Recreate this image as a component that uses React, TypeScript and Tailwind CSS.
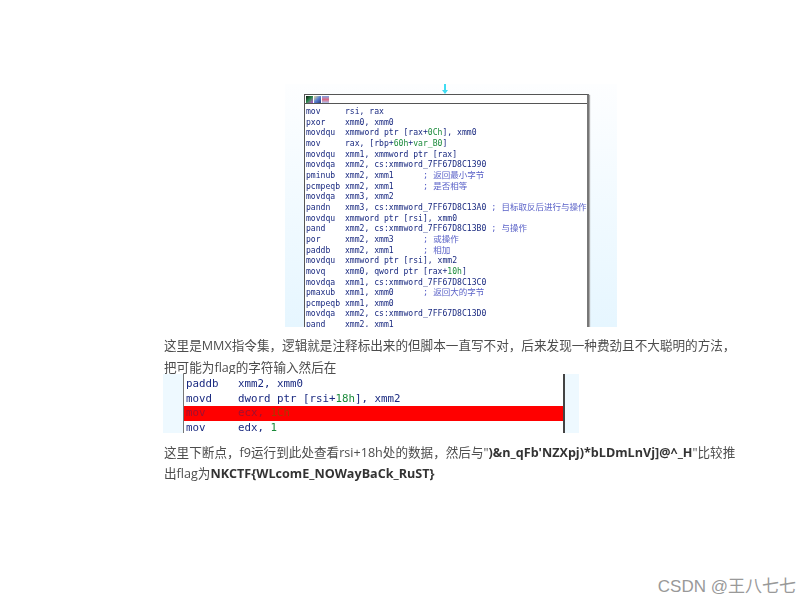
const mono = "font-['DejaVu_Sans_Mono','Noto_Sans_CJK_SC',monospace]";

type Seg = { t: string; c?: 'num' | 'note' };

// listing lines, clipped by the image box at the bottom
const listing: Seg[][] = [
  [{ t: 'mov     rsi, rax' }],
  [{ t: 'pxor    xmm0, xmm0' }],
  [{ t: 'movdqu  xmmword ptr [rax+' }, { t: '0Ch', c: 'num' }, { t: '], xmm0' }],
  [{ t: 'mov     rax, [rbp+' }, { t: '60h', c: 'num' }, { t: '+' }, { t: 'var_B0', c: 'num' }, { t: ']' }],
  [{ t: 'movdqu  xmm1, xmmword ptr [rax]' }],
  [{ t: 'movdqa  xmm2, cs:xmmword_7FF67D8C1390' }],
  [{ t: 'pminub  xmm2, xmm1      ' }, { t: '; 返回最小字节', c: 'note' }],
  [{ t: 'pcmpeqb xmm2, xmm1      ' }, { t: '; 是否相等', c: 'note' }],
  [{ t: 'movdqa  xmm3, xmm2' }],
  [{ t: 'pandn   xmm3, cs:xmmword_7FF67D8C13A0 ' }, { t: '; 目标取反后进行与操作', c: 'note' }],
  [{ t: 'movdqu  xmmword ptr [rsi], xmm0' }],
  [{ t: 'pand    xmm2, cs:xmmword_7FF67D8C13B0 ' }, { t: '; 与操作', c: 'note' }],
  [{ t: 'por     xmm2, xmm3      ' }, { t: '; 或操作', c: 'note' }],
  [{ t: 'paddb   xmm2, xmm1      ' }, { t: '; 相加', c: 'note' }],
  [{ t: 'movdqu  xmmword ptr [rsi], xmm2' }],
  [{ t: 'movq    xmm0, qword ptr [rax+' }, { t: '10h', c: 'num' }, { t: ']' }],
  [{ t: 'movdqa  xmm1, cs:xmmword_7FF67D8C13C0' }],
  [{ t: 'pmaxub  xmm1, xmm0      ' }, { t: '; 返回大的字节', c: 'note' }],
  [{ t: 'pcmpeqb xmm1, xmm0' }],
  [{ t: 'movdqa  xmm2, cs:xmmword_7FF67D8C13D0' }],
  [{ t: 'pand    xmm2, xmm1' }],
];

function ListingImage() {
  return (
    <div className="ml-[121px] w-[332px] h-[243px] bg-gradient-to-b from-[#fdfeff] to-[#e6f6ff] overflow-hidden flex flex-col pl-[19px] blur-[0.4px]">
      <svg className="ml-[138px] shrink-0" width="6" height="10" viewBox="0 0 6 10">
        <path d="M2 0 H4 V6 H6 L3 10 L0 6 H2 Z" fill="#3fdcf2" />
      </svg>
      <div className="w-[285px] shrink-0 bg-white border border-[#555] border-r-2 border-r-[#777] shadow-[1px_1px_1px_#aaa]">
        <div className="h-[9px] flex items-center gap-[1px] pl-[1px] border-b border-[#555]">
          <div className="w-[7px] h-[7px] bg-gradient-to-br from-[#0a1a10] via-[#2a8a50] to-[#b040d0]" />
          <div className="w-[7px] h-[7px] bg-gradient-to-br from-[#e8d890] via-[#5a80d0] to-[#2a3a80]" />
          <div className="w-[7px] h-[7px] bg-gradient-to-b from-[#7aa4e4] via-[#d86a8a] to-[#a8c4ec]" />
        </div>
        <div className={`${mono} pl-[1px] pt-[2px] text-[8.1px] leading-[10.67px] text-[#1a2a80]`}>
          {listing.map((line, i) => (
            <div key={i} className="whitespace-pre h-[10.67px]">
              {line.map((s, j) => (
                <span
                  key={j}
                  className={
                    s.c === 'num' ? 'text-[#1a8a3a]' : s.c === 'note' ? 'text-[#5a62c8] text-[8.5px]' : ''
                  }
                >
                  {s.t}
                </span>
              ))}
            </div>
          ))}
        </div>
      </div>
    </div>
  );
}

function BreakpointImage() {
  const row = 'h-[14.5px] pl-[2px] whitespace-pre';
  return (
    <div className="w-[416px] h-[59px] bg-[#eef9ff] overflow-hidden pl-[20px] pr-[14px] blur-[0.3px]">
      <div className={`${mono} h-full bg-white border-l border-r-2 border-l-[#777] border-r-[#444] pt-[3px] text-[10.8px] leading-[14.5px] text-[#1a2a80]`}>
        <div className={row}>paddb   xmm2, xmm0</div>
        <div className={row}>
          movd    dword ptr [rsi+<span className="text-[#1a8a3a]">18h</span>], xmm2
        </div>
        <div className={`${row} bg-[#ff0000] text-[#a01030]`}>
          mov     ecx, <span className="text-[#a83a00]">1Ch</span>
        </div>
        <div className={row}>
          mov     edx, <span className="text-[#1a8a3a]">1</span>
        </div>
      </div>
    </div>
  );
}

export default function App() {
  return (
    <div className="relative w-[811px] h-[604px] bg-white overflow-hidden pt-[84px] pl-[164px] font-['Open_Sans','Noto_Sans_CJK_SC',sans-serif] text-[#4d4d4d]">
      <ListingImage />
      <div className="mt-[8px] -mb-[5px] text-[12.6px] leading-[22px] blur-[0.25px] w-[590px]">
        <p className="whitespace-nowrap">这里是MMX指令集，逻辑就是注释标出来的但脚本一直写不对，后来发现一种费劲且不大聪明的方法，</p>
        <p>把可能为flag的字符输入然后在</p>
      </div>
      <div className="-ml-[1px] relative">
        <BreakpointImage />
      </div>
      <div className="mt-[9px] text-[12.6px] leading-[21px] blur-[0.25px] w-[590px]">
        <p className="whitespace-nowrap">
          这里下断点，f9运行到此处查看rsi+18h处的数据，然后与"
          <b className="font-bold text-[#333]">)&amp;n_qFb'NZXpj)*bLDmLnVj]@^_H</b>"比较推
        </p>
        <p className="whitespace-nowrap">
          出flag为<b className="font-bold text-[#333]">NKCTF{'{'}WLcomE_NOWayBaCk_RuST{'}'}</b>
        </p>
      </div>
      <div className="absolute right-[15px] top-[576px] text-[17px] leading-[22px] text-[#999999] font-['Liberation_Sans','Noto_Sans_CJK_SC',sans-serif]">
        CSDN @王八七七
      </div>
    </div>
  );
}
